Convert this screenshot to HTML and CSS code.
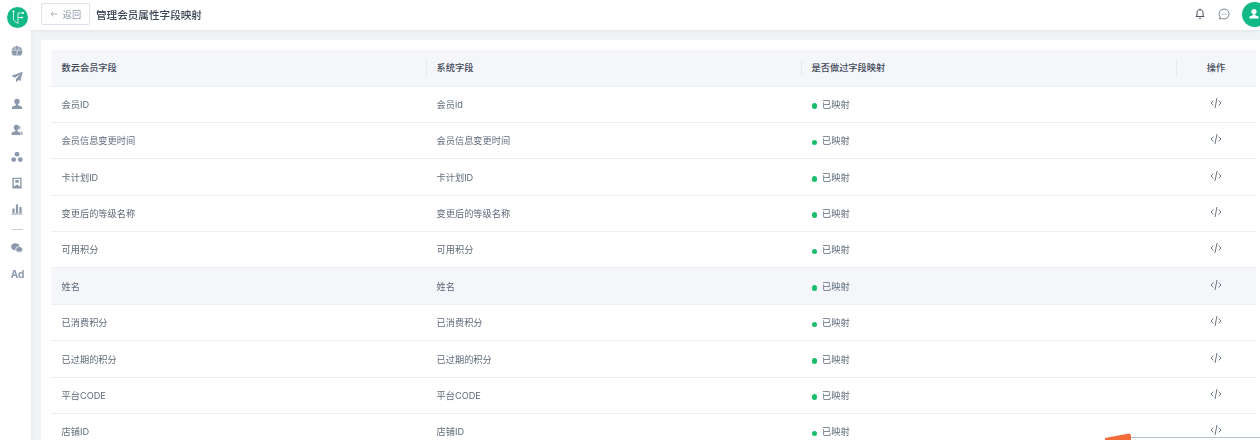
FILE: index.html
```html
<!DOCTYPE html>
<html lang="zh-CN">
<head>
    <meta charset="UTF-8">
    <meta name="viewport" content="width=device-width, initial-scale=1.0">
    <title>管理会员属性字段映射</title>
    <link rel="stylesheet" href="styles.css">
</head>
<body>
    <svg class="sprite" width="0" height="0">
        <symbol id="code" viewBox="0 0 12 12">
            <path d="M3.400 3.600 1 6l2.400 2.400M8.600 3.600 11 6 8.600 8.400M7 1 5 11" fill="none" stroke="#5b6675" stroke-width="0.9"/>
        </symbol>
    </svg>

    <aside class="sidebar">
        <div class="logo">
            <svg viewBox="0 0 21 21" width="21" height="21" fill="none" stroke="#fff" stroke-width="0.8">
                <circle cx="10.500" cy="10.500" r="10.500" fill="#12b886" stroke="none"/>
                <path d="M6.500 4.500v8.500l3.500 3M11 17V6h5M11 10.500h4"/>
                <circle cx="6.500" cy="4.500" r="0.700" fill="#fff"/>
                <circle cx="16" cy="6" r="0.700" fill="#fff"/>
                <circle cx="15" cy="10.500" r="0.700" fill="#fff"/>
            </svg>
        </div>
        <nav class="side-nav">
            <svg class="side-icon" viewBox="0 0 12 12"><path d="M6 1a5.400 5.400 0 0 0-5.400 5.400c0 1.700.6 3 1.700 4h7.400a5.400 5.400 0 0 0 1.700-4A5.400 5.400 0 0 0 6 1z"/><path class="cut" d="M4.200 1.500v3M7.800 1.500v3M1.200 5.200h9.600M6.400 5.600 5.600 10"/></svg>
            <svg class="side-icon" viewBox="0 0 12 12"><path d="M11.800.8.400 4.800l3.400 1.900L9.300 3 5 8v3.400l2-2.500 2.400 1.200z"/></svg>
            <svg class="side-icon" viewBox="0 0 12 12"><circle cx="6" cy="3.400" r="2.700"/><path d="M4.800 6h2.400v1.200l3.800 1.500v2.400H1V8.700l3.800-1.500z"/></svg>
            <svg class="side-icon" viewBox="0 0 12 12"><circle cx="5.400" cy="3.400" r="2.600"/><path d="M4.300 6h2.200v1.200l3 1.400v2.300H.6V8.600l3.700-1.400zM8.400 1.400a2.600 2.600 0 0 1 0 4.400zM8.700 6.600l2.800 1.700v2.600h-1.200V8.200z"/></svg>
            <svg class="side-icon" viewBox="0 0 12 12"><circle cx="6" cy="3.200" r="2.400"/><circle cx="2.700" cy="8.600" r="2.400"/><circle cx="9.300" cy="8.600" r="2.400"/></svg>
            <svg class="side-icon" viewBox="0 0 12 12"><path fill-rule="evenodd" d="M1.400.8h9.200v10.800H1.400zM2.800 2.100v7.400l3.200-2 3.200 2V2.100z"/><path d="M4.300 3h3.400v2.800H4.300z"/></svg>
            <svg class="side-icon" viewBox="0 0 12 12"><path d="M1.400 5.400h2.200v4.600H1.400zM4.900 1.600h2.200V10H4.900zM8.400 4h2.200v6H8.400zM.6 10.500h10.800v.9H.6z"/></svg>
            <div class="side-divider"></div>
            <svg class="side-icon" viewBox="0 0 12 12"><ellipse cx="4.400" cy="4.700" rx="4.200" ry="3.500"/><ellipse class="ring" cx="8.200" cy="7.400" rx="3.500" ry="2.900"/></svg>
            <span class="side-ad">Ad</span>
        </nav>
    </aside>

    <div class="main">
        <header class="topbar">
            <button class="back-btn">
                <svg viewBox="0 0 10 10" width="8" height="8" fill="none" stroke="#8c96a5" stroke-width="0.9"><path d="M9 5H1.400M4.400 2 1.400 5l3 3"/></svg>
                <span>返回</span>
            </button>
            <h1 class="page-title">管理会员属性字段映射</h1>
            <div class="top-actions">
                <svg viewBox="0 0 12 12" width="12" height="12" fill="none" stroke="#3d4656" stroke-width="1"><path d="M6 1.600c-2 0-3 1.500-3 3.300v2.300l-1 1.400h8L9 7.200V4.900c0-1.800-1-3.300-3-3.300zM6 .8v.8M5 10.200c.4.600 1.600.600 2 0"/></svg>
                <svg viewBox="0 0 12 12" width="12" height="12" fill="none" stroke="#5b6675" stroke-width="0.8"><path d="M6 1a5 5 0 1 1-2.300 9.400L1.500 11l.6-2A5 5 0 0 1 6 1z"/><path d="M3.700 6h.8M5.600 6h.8M7.500 6h.8" stroke-width="1"/></svg>
                <div class="avatar">
                    <svg viewBox="0 0 12 12" width="12" height="12" fill="#fff"><circle cx="6" cy="3.600" r="2.600"/><path d="M4.800 6.200h2.400v1l3.300 1.300v2H1.500v-2l3.300-1.300z"/></svg>
                </div>
            </div>
        </header>

        <div class="content">
            <div class="card">
                <table class="map-table">
                    <colgroup>
                        <col class="col-field">
                        <col class="col-system">
                        <col>
                        <col class="col-action">
                    </colgroup>
                    <thead>
                        <tr>
                            <th>数云会员字段</th>
                            <th><span class="th-sep"></span>系统字段</th>
                            <th><span class="th-sep"></span>是否做过字段映射</th>
                            <th class="col-op"><span class="th-sep"></span>操作</th>
                        </tr>
                    </thead>
                    <tbody>
                        <tr><td>会员ID</td><td>会员id</td><td><i class="dot"></i>已映射</td><td class="col-op"><svg class="code-ic"><use href="#code"/></svg></td></tr>
                        <tr><td>会员信息变更时间</td><td>会员信息变更时间</td><td><i class="dot"></i>已映射</td><td class="col-op"><svg class="code-ic"><use href="#code"/></svg></td></tr>
                        <tr><td>卡计划ID</td><td>卡计划ID</td><td><i class="dot"></i>已映射</td><td class="col-op"><svg class="code-ic"><use href="#code"/></svg></td></tr>
                        <tr><td>变更后的等级名称</td><td>变更后的等级名称</td><td><i class="dot"></i>已映射</td><td class="col-op"><svg class="code-ic"><use href="#code"/></svg></td></tr>
                        <tr><td>可用积分</td><td>可用积分</td><td><i class="dot"></i>已映射</td><td class="col-op"><svg class="code-ic"><use href="#code"/></svg></td></tr>
                        <tr class="hovered"><td>姓名</td><td>姓名</td><td><i class="dot"></i>已映射</td><td class="col-op"><svg class="code-ic"><use href="#code"/></svg></td></tr>
                        <tr><td>已消费积分</td><td>已消费积分</td><td><i class="dot"></i>已映射</td><td class="col-op"><svg class="code-ic"><use href="#code"/></svg></td></tr>
                        <tr><td>已过期的积分</td><td>已过期的积分</td><td><i class="dot"></i>已映射</td><td class="col-op"><svg class="code-ic"><use href="#code"/></svg></td></tr>
                        <tr><td>平台CODE</td><td>平台CODE</td><td><i class="dot"></i>已映射</td><td class="col-op"><svg class="code-ic"><use href="#code"/></svg></td></tr>
                        <tr><td>店铺ID</td><td>店铺ID</td><td><i class="dot"></i>已映射</td><td class="col-op"><svg class="code-ic"><use href="#code"/></svg></td></tr>
                    </tbody>
                </table>
            </div>
        </div>
    </div>

    <!-- annotation drawn over the screenshot -->
    <div class="mark-line"></div>
    <svg class="mark-arrow" viewBox="0 0 27 8" width="27" height="8"><path d="M0 5 L24 .4 L26 2 L26 8 L0 8z" fill="#f26b38"/></svg>
</body>
</html>
```

FILE: styles.css
```css
* {
    box-sizing: border-box;
}

html, body {
    height: 100%;
}

body {
    margin: 0;
    display: flex;
    height: 440px;
    overflow: hidden;
    position: relative;
    background-color: #f1f3f7;
    color: #5f6a79;
    font-family: "Inter", "Noto Sans CJK SC", sans-serif;
    font-size: 9.2px;
    filter: blur(0.35px); /* the source capture is slightly soft */
}

.sprite {
    position: absolute;
}

.sidebar {
    width: 31px;
    flex-shrink: 0;
    background: #fff;
    display: flex;
    flex-direction: column;
    align-items: center;
    padding-top: 7px;
    padding-left: 4px;
    box-shadow: 1px 0 3px rgba(40, 50, 70, 0.06);
}

.logo {
    height: 21px;
}

.side-nav {
    display: flex;
    flex-direction: column;
    align-items: center;
    margin-top: 10px;
}

.side-icon {
    width: 12px;
    height: 12px;
    margin-top: 7px;
    margin-bottom: 7.4px;
    fill: #8c99ad;
}

.side-icon .cut {
    fill: none;
    stroke: #fff;
    stroke-width: 0.6;
}

.side-icon .ring {
    stroke: #fff;
    stroke-width: 0.7;
}

.side-divider {
    width: 11px;
    height: 1px;
    background: #c9ced6;
    margin: 6px 0 5.5px;
}

.side-ad {
    margin-top: 6.5px;
    font-family: "Inter", sans-serif;
    font-size: 10px;
    font-weight: 700;
    color: #8c99ad;
}

.main {
    flex: 1;
    min-width: 0;
    display: flex;
    flex-direction: column;
}

.topbar {
    height: 30px;
    flex-shrink: 0;
    background: #fff;
    display: flex;
    align-items: center;
    padding-left: 10px;
    box-shadow: 0 1px 3px rgba(40, 50, 70, 0.08);
}

.back-btn {
    width: 49px;
    height: 22px;
    margin-top: -2px;
    padding: 0;
    display: flex;
    align-items: center;
    justify-content: center;
    gap: 5px;
    background: #fff;
    border: 1px solid #dfe3e9;
    border-radius: 2px;
    color: #8c96a5;
    font-family: inherit;
    font-size: 9.2px;
}

.page-title {
    margin: -2px 0 0 6px;
    font-size: 10.6px;
    font-weight: 500;
    color: #3d4656;
}

.top-actions {
    margin-left: auto;
    margin-top: -2px;
    display: flex;
    align-items: center;
}

.top-actions svg {
    display: block;
}

.top-actions > svg:nth-child(2) {
    margin-left: 12px;
}

.avatar {
    width: 25px;
    height: 25px;
    margin-left: 12px;
    margin-right: -7px;
    border-radius: 50%;
    background: #12b886;
    display: flex;
    align-items: center;
    justify-content: center;
    padding-right: 1px;
}

.content {
    flex: 1;
    min-height: 0;
    padding: 10px 0 0 10px;
}

.card {
    height: 100%;
    background: #fff;
    padding: 10px 4px 0 10px;
}

.map-table {
    width: 100%;
    border-collapse: collapse;
    table-layout: fixed;
}

.col-field {
    width: 375px;
}

.col-system {
    width: 375px;
}

.col-action {
    width: 80px;
}

.map-table th,
.map-table td {
    padding: 0 0 0 10.6px;
    text-align: left;
    white-space: nowrap;
    font-weight: 400;
    border-bottom: 1px solid #eceef2;
}

.map-table th {
    height: 36px;
    padding-bottom: 1.5px;
    background: #f4f6fa;
    color: #3d4656;
    font-weight: 500;
    position: relative;
}

.map-table td {
    height: 36.4px;
    padding-bottom: 0.8px;
}

.th-sep {
    position: absolute;
    left: 0;
    top: 10px;
    bottom: 10px;
    width: 1px;
    background: #e6e9ee;
}

.map-table .col-op {
    padding-left: 0;
    text-align: center;
}

.code-ic {
    display: block;
    width: 12px;
    height: 12px;
    margin: -2px auto 0;
}

.hovered td {
    background: #f4f6fa;
}

.dot {
    display: inline-block;
    width: 5.5px;
    height: 5.5px;
    border-radius: 50%;
    background: #19be6b;
    margin-right: 5px;
    vertical-align: -1px;
}

.mark-line {
    position: absolute;
    left: 1131px;
    right: 0;
    top: 437px;
    height: 1px;
    background: #b3bfcf;
}

.mark-arrow {
    position: absolute;
    left: 1105px;
    top: 433px;
}
```
